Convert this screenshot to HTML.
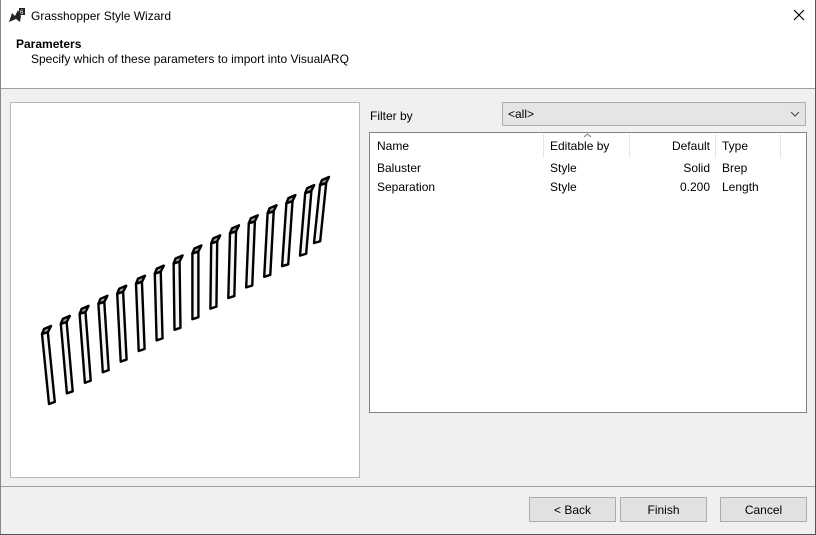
<!DOCTYPE html>
<html><head><meta charset="utf-8"><style>
body{margin:0;width:816px;height:535px;overflow:hidden;background:#f0f0f0;font-family:"Liberation Sans",sans-serif;font-size:12px;color:#000;position:relative}
.abs{position:absolute}
.btn{position:absolute;top:497px;width:85px;height:23px;border:1px solid #adadad;background:#e1e1e1;text-align:center;line-height:24px;font-size:12px}
</style></head><body>
<div class="abs" style="left:0;top:0;width:815px;height:88px;background:#fff;border-bottom:1px solid #a0a0a0"></div>
<div class="abs" style="left:0;top:0;width:1px;height:535px;background:#888"></div>
<div class="abs" style="right:0;top:0;width:1px;height:535px;background:#555"></div>
<div class="abs" style="left:0;bottom:0;width:816px;height:1px;background:#555"></div>
<svg class="abs" style="left:8px;top:7px" width="18" height="17" viewBox="0 0 18 17"><path d="M1 15 L4 6 L7 9 L10 3 L13 9 L12 15 L8 12 Z" fill="#222"/><rect x="11" y="1" width="6" height="7" fill="#222"/><text x="12" y="7" font-size="6" fill="#fff" font-family="Liberation Sans">6</text></svg>
<div class="abs" style="left:31px;top:9px;font-size:12px">Grasshopper Style Wizard</div>
<svg class="abs" style="left:793px;top:9px" width="12" height="12"><path d="M1 1L11 11M11 1L1 11" stroke="#000" stroke-width="1.2"/></svg>
<div class="abs" style="left:16px;top:37px;font-weight:bold">Parameters</div>
<div class="abs" style="left:31px;top:52px">Specify which of these parameters to import into VisualARQ</div>
<div class="abs" style="left:10px;top:102px;width:348px;height:374px;background:#fff;border:1px solid #b8b8b8"></div>
<svg class="abs" style="left:0;top:0" width="816" height="535">
<defs>
<polygon id="body" points="0,0 6,-0.03 6,0.97 0,1" fill="#f4f4f4" stroke="#000" stroke-width="2.4" stroke-linejoin="round" vector-effect="non-scaling-stroke"/>
<polygon id="cap" points="0,0 2,-5 9,-8 6,-2" fill="#aaa" stroke="#000" stroke-width="2.4" stroke-linejoin="round"/>
</defs>
<g transform="translate(42,334)"><use href="#body" transform="matrix(1,0,7,70,0,0)"/><use href="#cap"/></g>
<g transform="translate(60.8,323.9)"><use href="#body" transform="matrix(1,0,6.1,69.5,0,0)"/><use href="#cap"/></g>
<g transform="translate(79.6,313.9)"><use href="#body" transform="matrix(1,0,5.3,68.9,0,0)"/><use href="#cap"/></g>
<g transform="translate(98.4,303.8)"><use href="#body" transform="matrix(1,0,4.4,68.4,0,0)"/><use href="#cap"/></g>
<g transform="translate(117.2,293.7)"><use href="#body" transform="matrix(1,0,3.5,67.9,0,0)"/><use href="#cap"/></g>
<g transform="translate(136,283.7)"><use href="#body" transform="matrix(1,0,2.7,67.3,0,0)"/><use href="#cap"/></g>
<g transform="translate(154.8,273.6)"><use href="#body" transform="matrix(1,0,1.8,66.8,0,0)"/><use href="#cap"/></g>
<g transform="translate(173.6,263.5)"><use href="#body" transform="matrix(1,0,0.9,66.3,0,0)"/><use href="#cap"/></g>
<g transform="translate(192.4,253.5)"><use href="#body" transform="matrix(1,0,0,65.7,0,0)"/><use href="#cap"/></g>
<g transform="translate(211.2,243.4)"><use href="#body" transform="matrix(1,0,-0.8,65.2,0,0)"/><use href="#cap"/></g>
<g transform="translate(230,233.3)"><use href="#body" transform="matrix(1,0,-1.7,64.7,0,0)"/><use href="#cap"/></g>
<g transform="translate(248.8,223.3)"><use href="#body" transform="matrix(1,0,-2.6,64.1,0,0)"/><use href="#cap"/></g>
<g transform="translate(267.6,213.2)"><use href="#body" transform="matrix(1,0,-3.4,63.6,0,0)"/><use href="#cap"/></g>
<g transform="translate(286.4,203.1)"><use href="#body" transform="matrix(1,0,-4.3,63.1,0,0)"/><use href="#cap"/></g>
<g transform="translate(305.2,193.1)"><use href="#body" transform="matrix(1,0,-5.2,62.5,0,0)"/><use href="#cap"/></g>
<g transform="translate(320,185)"><use href="#body" transform="matrix(1,0,-6,58,0,0)"/><use href="#cap"/></g>
</svg>
<div class="abs" style="left:370px;top:109px">Filter by</div>
<div class="abs" style="left:502px;top:102px;width:302px;height:22px;border:1px solid #adadad;background:#e5e5e5"><span style="position:absolute;left:5px;top:4px">&lt;all&gt;</span><svg style="position:absolute;right:5px;top:8px" width="10" height="6"><path d="M1 1L5 5L9 1" stroke="#444" fill="none"/></svg></div>
<div class="abs" style="left:369px;top:132px;width:436px;height:279px;background:#fff;border:1px solid #828282"></div>
<div class="abs" style="left:543px;top:134px;width:1px;height:24px;background:#e5e5e5"></div>
<div class="abs" style="left:629px;top:134px;width:1px;height:24px;background:#e5e5e5"></div>
<div class="abs" style="left:715px;top:134px;width:1px;height:24px;background:#e5e5e5"></div>
<div class="abs" style="left:780px;top:134px;width:1px;height:24px;background:#e5e5e5"></div>
<svg class="abs" style="left:583px;top:133px" width="9" height="5"><path d="M1 4L4.5 1L8 4" stroke="#777" fill="none"/></svg>
<div class="abs" style="left:377px;top:139px">Name</div>
<div class="abs" style="left:550px;top:139px">Editable by</div>
<div class="abs" style="left:630px;top:139px;width:80px;text-align:right">Default</div>
<div class="abs" style="left:722px;top:139px">Type</div>
<div class="abs" style="left:377px;top:161px">Baluster</div>
<div class="abs" style="left:550px;top:161px">Style</div>
<div class="abs" style="left:630px;top:161px;width:80px;text-align:right">Solid</div>
<div class="abs" style="left:722px;top:161px">Brep</div>
<div class="abs" style="left:377px;top:180px">Separation</div>
<div class="abs" style="left:550px;top:180px">Style</div>
<div class="abs" style="left:630px;top:180px;width:80px;text-align:right">0.200</div>
<div class="abs" style="left:722px;top:180px">Length</div>
<div class="abs" style="left:1px;top:486px;width:814px;height:1px;background:#a0a0a0"></div>
<div class="btn" style="left:529px">&lt; Back</div>
<div class="btn" style="left:620px">Finish</div>
<div class="btn" style="left:720px">Cancel</div>
</body></html>
